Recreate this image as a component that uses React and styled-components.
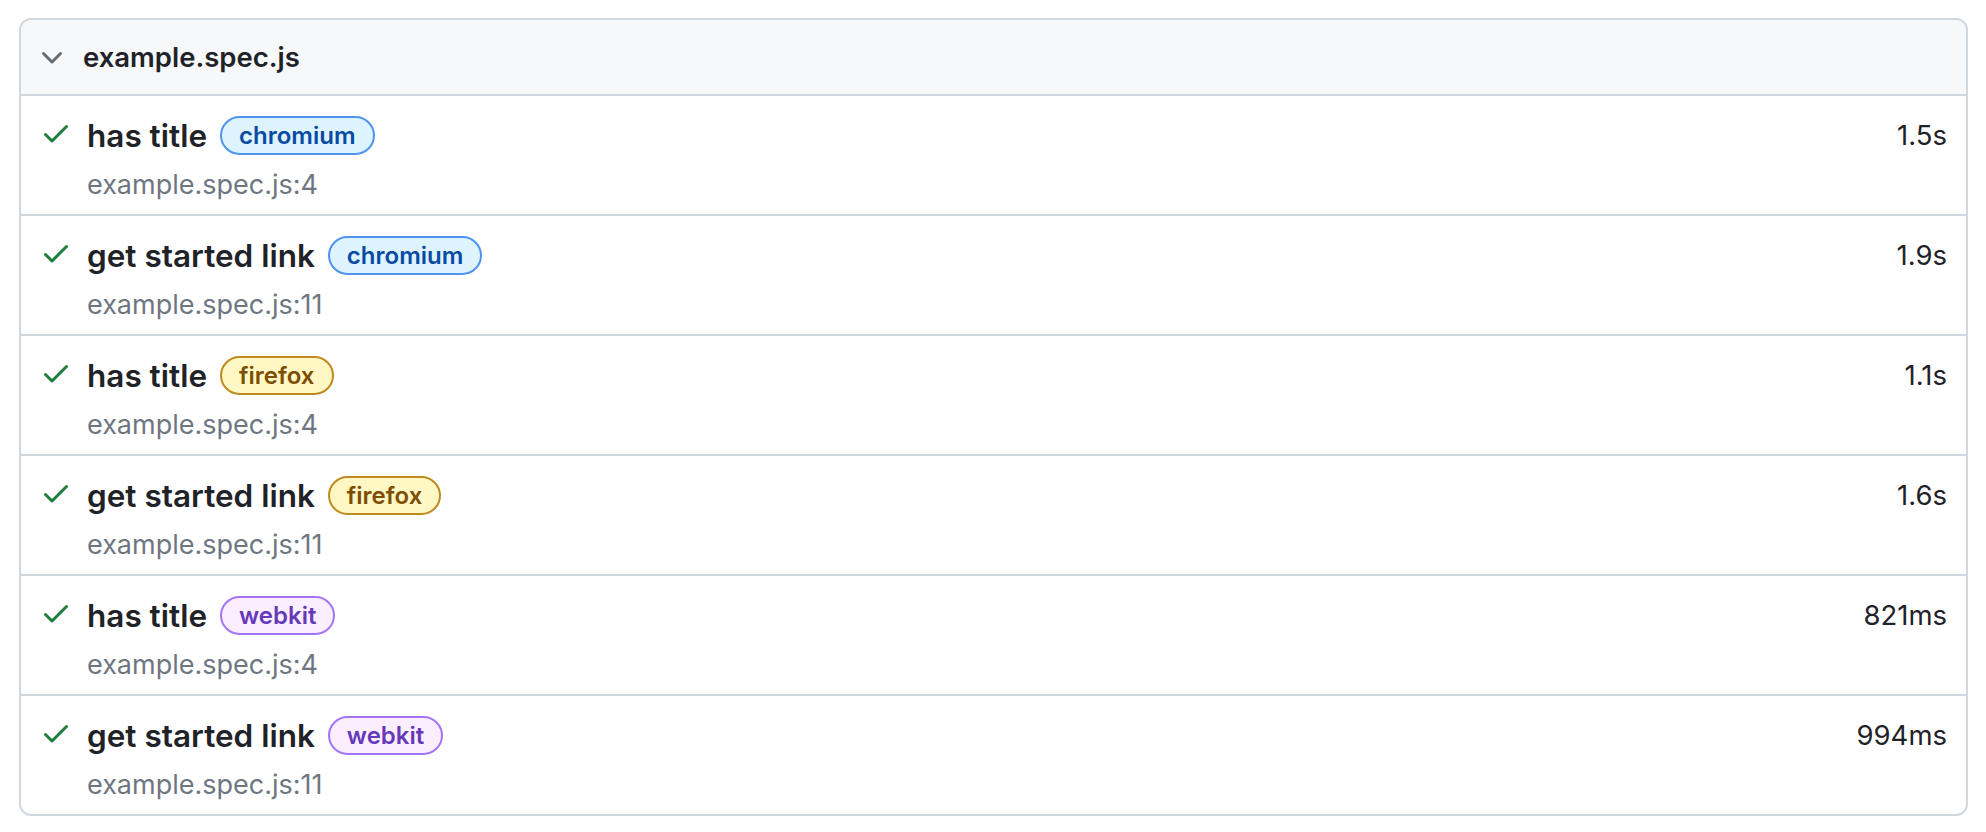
import styled, { createGlobalStyle } from "styled-components";

const GlobalStyle = createGlobalStyle`
  * { box-sizing: border-box; }
  body {
    margin: 0;
    background: #ffffff;
    font-family: Inter, "Noto Sans", "Liberation Sans", sans-serif;
    color: #1f2328;
  }
`;

const Page = styled.main`
  padding: 18px 18px 0 19px;
`;

const FileBox = styled.section`
  border: 2px solid #d0d7de;
  border-radius: 12px;
  overflow: hidden;
`;

const FileHeader = styled.header`
  height: 76px;
  display: flex;
  align-items: center;
  gap: 15px;
  padding-left: 15px;
  background: #f6f8fa;
  border-bottom: 2px solid #d0d7de;
  font-size: 27.5px;
  font-weight: 600;
  color: #1f2328;
  svg { fill: #656d76; flex: none; margin-top: 2px; }
`;

const TestRow = styled.div`
  height: 120px;
  display: flex;
  gap: 15px;
  padding: 19px 19px 0 19px;
  border-bottom: 2px solid #d0d7de;
  &:last-child { border-bottom: none; height: 118px; }
  > svg { fill: #1a7f37; flex: none; margin-top: 2px; }
`;

const TestBody = styled.div`
  flex: 1;
  display: flex;
  flex-direction: column;
  gap: 12px;
`;

const TitleLine = styled.div`
  height: 40px;
  display: flex;
  align-items: center;
  gap: 13px;
`;

const Title = styled.span`
  font-size: 31.5px;
  font-weight: 600;
  color: #1f2328;
`;

const chipColors = {
  chromium: { bg: "#ddf4ff", border: "#4f94f0", fg: "#0a4aa3" },
  firefox: { bg: "#fff8c5", border: "#bf8a1f", fg: "#7d4e00" },
  webkit: { bg: "#fbefff", border: "#a475f9", fg: "#6639ba" },
};

const Chip = styled.span`
  height: 39px;
  display: inline-flex;
  align-items: center;
  padding: 0 17px;
  border-radius: 20px;
  border: 2px solid ${(p) => chipColors[p.$kind].border};
  background: ${(p) => chipColors[p.$kind].bg};
  color: ${(p) => chipColors[p.$kind].fg};
  font-size: 24px;
  font-weight: 600;
`;

const Duration = styled.span`
  margin-left: auto;
  font-size: 27.5px;
  color: #1f2328;
`;

const Location = styled.div`
  font-size: 27px;
  line-height: 36px;
  color: #6e7781;
`;

const Chevron = () => (
  <svg width="32" height="32" viewBox="0 0 16 16">
    <path d="M12.78 5.22a.749.749 0 0 1 0 1.06l-4.25 4.25a.749.749 0 0 1-1.06 0L3.22 6.28a.749.749 0 1 1 1.06-1.06L8 8.939l3.72-3.719a.749.749 0 0 1 1.06 0Z" />
  </svg>
);

const Check = () => (
  <svg width="32" height="32" viewBox="0 0 16 16">
    <path d="M13.78 4.22a.75.75 0 0 1 0 1.06l-7.25 7.25a.75.75 0 0 1-1.06 0L2.22 9.28a.751.751 0 0 1 .018-1.042.751.751 0 0 1 1.042-.018L6 10.94l6.72-6.72a.75.75 0 0 1 1.06 0Z" />
  </svg>
);

const tests = [
  { title: "has title", project: "chromium", time: "1.5s", line: 4 },
  { title: "get started link", project: "chromium", time: "1.9s", line: 11 },
  { title: "has title", project: "firefox", time: "1.1s", line: 4 },
  { title: "get started link", project: "firefox", time: "1.6s", line: 11 },
  { title: "has title", project: "webkit", time: "821ms", line: 4 },
  { title: "get started link", project: "webkit", time: "994ms", line: 11 },
];

const App = () => {
  return (
    <Page>
      <GlobalStyle />
      <FileBox>
        <FileHeader>
          <Chevron />
          <span>example.spec.js</span>
        </FileHeader>
        {tests.map((t, i) => (
          <TestRow key={i}>
            <Check />
            <TestBody>
              <TitleLine>
                <Title>{t.title}</Title>
                <Chip $kind={t.project}>{t.project}</Chip>
                <Duration>{t.time}</Duration>
              </TitleLine>
              <Location>example.spec.js:{t.line}</Location>
            </TestBody>
          </TestRow>
        ))}
      </FileBox>
    </Page>
  );
};

export default App;
